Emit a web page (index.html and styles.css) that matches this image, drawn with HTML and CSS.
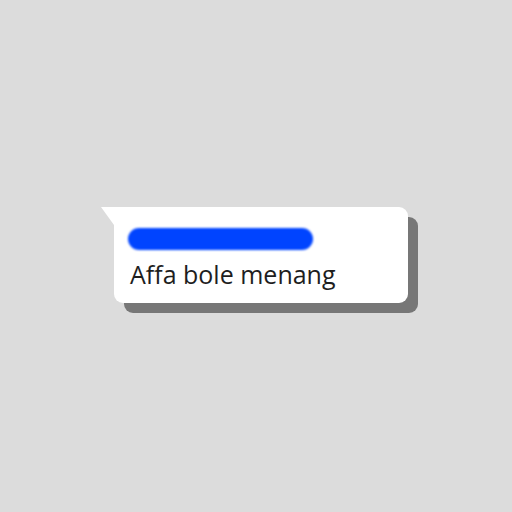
FILE: index.html
```html
<!DOCTYPE html>
<html lang="en">
<head>
    <meta charset="UTF-8">
    <title>Chat bubble</title>
    <link rel="stylesheet" href="styles.css">
</head>
<body>
    <!-- Message -->
    <div class="stage">
        <div class="bubble">
            <div class="sender"></div>
            <p class="message">Affa bole menang</p>
        </div>
    </div>
</body>
</html>
```

FILE: styles.css
```css
/* Page */
body {
    margin: 0;
    background-color: #dcdcdc;
    font-family: 'Open Sans', 'Noto Sans', sans-serif;
    color: #1e1e1e;
}

.stage {
    min-height: 100vh;
    box-sizing: border-box;
    padding: 207px 0 0 114px;
}

/* Bubble */
.bubble {
    position: relative;
    width: 294px;
    height: 96px;
    box-sizing: border-box;
    padding: 21px 14px 0;
    background-color: #fff;
    border-radius: 0 9px 9px 9px;
    box-shadow: 10px 10px 0 #777;
}

/* Tail */
.bubble::before {
    content: "";
    position: absolute;
    top: 0;
    left: -13px;
    border-top: 18px solid #fff;
    border-left: 13px solid transparent;
}

/* Blurred sender name */
.sender {
    width: 185px;
    height: 22px;
    border-radius: 11px;
    background-color: #0044ff;
    filter: blur(1px);
}

.message {
    margin: 8px 0 0 2px;
    font-size: 25px;
    line-height: 32px;
}
```
